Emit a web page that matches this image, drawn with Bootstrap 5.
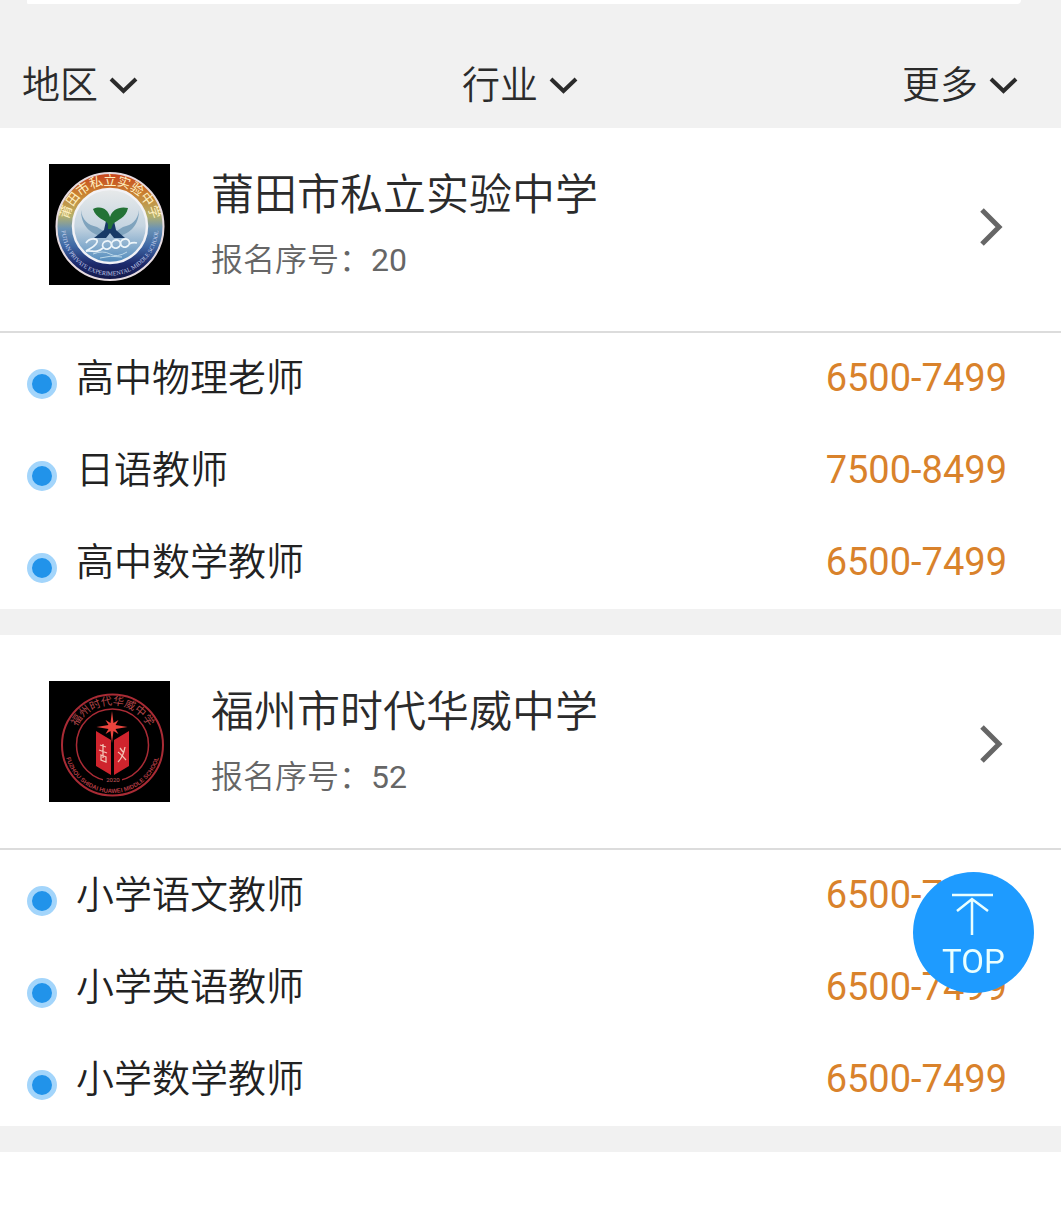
<!DOCTYPE html>
<html lang="zh-CN">
<head>
<meta charset="utf-8">
<meta name="viewport" content="width=device-width, initial-scale=1">
<title>招聘单位</title>
<link rel="stylesheet" href="https://cdn.jsdelivr.net/npm/bootstrap@5.3.0/dist/css/bootstrap.min.css">
<style>
  body { font-family: Roboto, "Noto Sans CJK SC", sans-serif; color: #222; background: #fff; }
  a { color: inherit; text-decoration: none; }
  .filter-area { background: #f1f1f1; }
  .panel-edge { height: 4px; margin: 0 40px 0 27px; background: #fff; border-radius: 0 0 12px 4px; }
  .filter-row { padding: 52px 43px 14px 22px; }
  .filter-btn { font-size: 38px; line-height: 58px; font-weight: 350; color: #2b2b2b; gap: 11px; }
  .filter-btn svg { width: 29px; height: 18px; }
  .school-head { padding: 46px 57px 46px 49px; border-bottom: 2px solid #dcdcdc; }
  .school:first-child .school-head { padding-top: 36px; }
  .school { border-bottom: 26px solid #f1f1f1; }
  .school-logo { width: 121px; height: 121px; margin-right: 41px; }
  .school-name { font-size: 43px; line-height: 60px; font-weight: 350; color: #2b2b2b; }
  .school-no { font-size: 32px; line-height: 48px; font-weight: 350; color: #666; margin-top: 11px; }
  .school-no span, .pay { font-weight: 400; }
  .go-icon { width: 26px; height: 42px; margin-top: 4px; }
  .job { height: 92px; padding: 0 54px 2px 27px; font-size: 38px; line-height: 56px; font-weight: 350; }
  .dot { width: 30px; height: 30px; border: 5px solid #a3d5fb; background: #2193ea; border-radius: 50%; margin: 12px 19px 0 0; }
  .pay { color: #d9822b; }
  .to-top { right: 27px; bottom: 215px; width: 121px; height: 121px; border: 0; border-radius: 50%; background: #1e9bff; color: #eaffff; font-size: 33px; line-height: 40px; padding: 8px 0 0; }
  .to-top svg { width: 44px; height: 44px; margin-bottom: 6px; }
</style>
</head>
<body>
<header class="filter-area">
  <div class="panel-edge"></div>
  <nav class="filter-row d-flex justify-content-between" aria-label="筛选">
    <button type="button" class="filter-btn btn p-0 border-0 d-flex align-items-center">地区<svg viewBox="0 0 29 18" fill="none" stroke="currentColor" stroke-width="4" aria-hidden="true"><path d="M2 3l12.500 12L27 3"/></svg></button>
    <button type="button" class="filter-btn btn p-0 border-0 d-flex align-items-center">行业<svg viewBox="0 0 29 18" fill="none" stroke="currentColor" stroke-width="4" aria-hidden="true"><path d="M2 3l12.500 12L27 3"/></svg></button>
    <button type="button" class="filter-btn btn p-0 border-0 d-flex align-items-center">更多<svg viewBox="0 0 29 18" fill="none" stroke="currentColor" stroke-width="4" aria-hidden="true"><path d="M2 3l12.500 12L27 3"/></svg></button>
  </nav>
</header>
<main>
  <section class="school">
    <a href="#" class="school-head d-flex align-items-center">
      <svg class="school-logo flex-shrink-0" viewBox="0 0 121 121" aria-hidden="true">
        <defs>
          <linearGradient id="ring" x1="0" y1="0" x2="0" y2="1"><stop offset="0" stop-color="#c8421d"/><stop offset=".2" stop-color="#c98332"/><stop offset=".4" stop-color="#b5b06a"/><stop offset=".52" stop-color="#6b93b5"/><stop offset=".68" stop-color="#3f68a5"/><stop offset=".85" stop-color="#1d2a6c"/><stop offset="1" stop-color="#141848"/></linearGradient>
          <linearGradient id="disc" x1="0" y1="0" x2="0" y2="1"><stop offset="0" stop-color="#e8eaea"/><stop offset=".5" stop-color="#c6d5e1"/><stop offset="1" stop-color="#508abc"/></linearGradient>
          <path id="arcA" d="M20 72A42 42 0 1 1 102 72"/>
          <path id="arcB" d="M12.500 63A48.500 48.500 0 0 0 109.500 63"/>
        </defs>
        <rect width="121" height="121" fill="#000"/>
        <circle cx="61" cy="62.500" r="53.500" fill="url(#ring)" stroke="#e6dbe0" stroke-width="2"/>
        <circle cx="61" cy="62" r="37" fill="url(#disc)" stroke="#f2f2f6" stroke-width="2.500"/>
        <text font-size="13" font-weight="400" fill="#fff0c0" text-anchor="middle"><textPath href="#arcA" startOffset="50%">莆田市私立实验中学</textPath></text>
        <text font-family="Liberation Serif" font-size="6" fill="#c8d2ee" text-anchor="middle"><textPath href="#arcB" startOffset="50%">PUTIAN PRIVATE EXPERIMENTAL MIDDLE SCHOOL</textPath></text>
        <path d="M32 46c1 10 7 15 16 17l8 5-4 4c-10-2-20-10-20-26zM90 46c-1 10-7 15-16 17l-8 5 4 4c10-2 20-10 20-26z" fill="#7fa3bd"/>
        <path d="M57 57h8l2 9 9 8H65l-4-5-4 5H45l10-8z" fill="#173a67"/>
        <path d="M59 60c-3-5-12-5-15-15 9-4 15 1 17 8 2-7 9-11 18-9-2 10-11 12-15 16l-2 5h-3z" fill="#237236"/>
        <path d="M37 79c4-6 15-5 10 1-3 4-7 5-10 7 7-1 10 3 17-3" fill="none" stroke="#edf5fa" stroke-width="1.800"/>
        <g fill="none" stroke="#edf5fa" stroke-width="1.800"><ellipse cx="58" cy="81" rx="4.500" ry="4" transform="rotate(-25 58 81)"/><ellipse cx="67" cy="80" rx="4.500" ry="4" transform="rotate(-25 67 80)"/><ellipse cx="76" cy="79" rx="4.500" ry="4" transform="rotate(-25 76 79)"/><path d="M80 80q4-2 8-1"/></g>
        <path d="M44 90q10-4 17 0t17-2M51 94q10-3 22-1" fill="none" stroke="#bdd8e9" stroke-width="1"/>
      </svg>
      <div class="flex-grow-1">
        <div class="school-name">莆田市私立实验中学</div>
        <div class="school-no">报名序号：<span>20</span></div>
      </div>
      <svg class="go-icon flex-shrink-0" viewBox="0 0 26 42" fill="none" stroke="#666" stroke-width="5" aria-hidden="true"><path d="M4 4l17 17L4 38"/></svg>
    </a>
    <ul class="list-unstyled mb-0">
      <li><a href="#" class="job d-flex align-items-center"><span class="dot"></span><span class="flex-grow-1">高中物理老师</span><span class="pay">6500-7499</span></a></li>
      <li><a href="#" class="job d-flex align-items-center"><span class="dot"></span><span class="flex-grow-1">日语教师</span><span class="pay">7500-8499</span></a></li>
      <li><a href="#" class="job d-flex align-items-center"><span class="dot"></span><span class="flex-grow-1">高中数学教师</span><span class="pay">6500-7499</span></a></li>
    </ul>
  </section>
  <section class="school">
    <a href="#" class="school-head d-flex align-items-center">
      <svg class="school-logo flex-shrink-0" viewBox="0 0 121 121" aria-hidden="true">
        <defs>
          <path id="arcC" d="M23.500 64A40 40 0 0 1 103.500 64"/>
          <path id="arcD" d="M15.500 64A48 48 0 0 0 111.500 64"/>
        </defs>
        <rect width="121" height="121" fill="#000"/>
        <g fill="none" stroke="#a92b35"><circle cx="63.500" cy="64" r="50.500" stroke-width="2"/><circle cx="63.500" cy="64" r="36" stroke-width="1.500"/></g>
        <text font-size="11" fill="#b04448" text-anchor="middle"><textPath href="#arcC" startOffset="50%">福州时代华威中学</textPath></text>
        <text font-family="Liberation Sans" font-size="6" font-weight="700" fill="#b23b42" text-anchor="middle"><textPath href="#arcD" startOffset="50%">FUZHOU SHIDAI HUAWEI MIDDLE SCHOOL</textPath></text>
        <path d="M47 50l15 9v35l-15-9zM80 50l-15 9v35l15-9z" fill="#cf242d"/>
        <path d="M63 30l1.500 12 5-3-3 5 12 2-12 2 3 5-5-3L63 62l-1.500-12-5 3 3-5-12-2 12-2-3-5 5 3z" fill="#e9443d"/>
        <path d="M51 64l6 2M50 69l8 3M52 74l5 2v5l-5-2zM54 63v14M71 67l3 4M76 66c-1 6-3 11-7 15M69 71c3 2 5 5 8 8" fill="none" stroke="#f2c2b4" stroke-width="1.300"/>
        <rect x="54" y="96" width="19" height="6" fill="#000"/>
        <text x="64" y="101" font-size="6" fill="#c55a5c" text-anchor="middle">2020</text>
      </svg>
      <div class="flex-grow-1">
        <div class="school-name">福州市时代华威中学</div>
        <div class="school-no">报名序号：<span>52</span></div>
      </div>
      <svg class="go-icon flex-shrink-0" viewBox="0 0 26 42" fill="none" stroke="#666" stroke-width="5" aria-hidden="true"><path d="M4 4l17 17L4 38"/></svg>
    </a>
    <ul class="list-unstyled mb-0">
      <li><a href="#" class="job d-flex align-items-center"><span class="dot"></span><span class="flex-grow-1">小学语文教师</span><span class="pay">6500-7499</span></a></li>
      <li><a href="#" class="job d-flex align-items-center"><span class="dot"></span><span class="flex-grow-1">小学英语教师</span><span class="pay">6500-7499</span></a></li>
      <li><a href="#" class="job d-flex align-items-center"><span class="dot"></span><span class="flex-grow-1">小学数学教师</span><span class="pay">6500-7499</span></a></li>
    </ul>
  </section>
</main>
<button type="button" class="to-top position-fixed d-flex flex-column align-items-center justify-content-center">
  <svg viewBox="0 0 44 44" fill="none" stroke="currentColor" stroke-width="2.500" aria-hidden="true"><path d="M0 3h41M20 43V7M5 19L20 7l16 12"/></svg>
  TOP
</button>
<script src="https://cdn.jsdelivr.net/npm/bootstrap@5.3.0/dist/js/bootstrap.bundle.min.js"></script>
</body>
</html>
